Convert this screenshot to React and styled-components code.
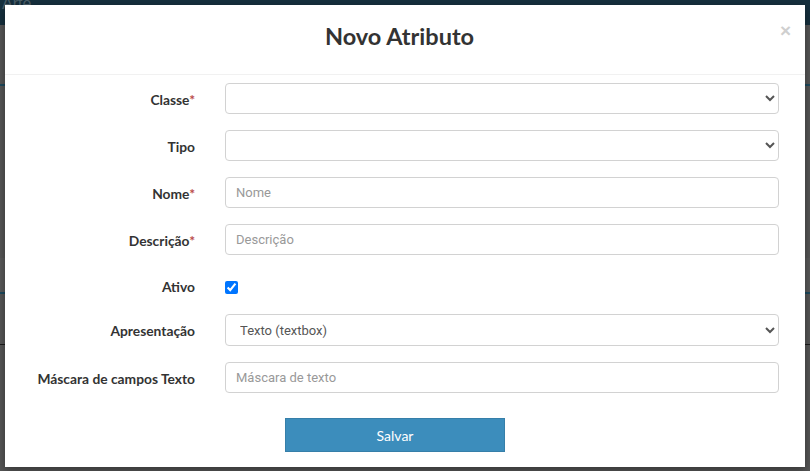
import React from 'react'
import styled, { createGlobalStyle } from 'styled-components'

const GlobalStyle = createGlobalStyle`
  html, body {
    margin: 0;
    padding: 0;
    width: 810px;
    height: 471px;
    overflow: hidden;
    background: #565656;
    font-family: Lato, "Noto Sans", sans-serif;
  }
  * { box-sizing: border-box; }
`

// the dimmed page behind the dialog
const Page = styled.div`
  position: relative;
  width: 810px;
  height: 471px;
  display: flex;
  flex-direction: column;
  background: #565656;
`

const TopBar = styled.div`
  height: 25px;
  background: #16303e;
  color: #4c5f69;
  font-size: 16px;
  line-height: 8px;
  padding-left: 2px;
  font-family: "Liberation Sans", sans-serif;
`

const Band = styled.div`
  height: ${p => p.h}px;
  background: ${p => p.bg || '#565656'};
  border-bottom: ${p => p.line ? `${p.lineW || 2}px solid ${p.line}` : 'none'};
`

const Modal = styled.div`
  position: absolute;
  top: 5px;
  left: 5px;
  width: 800px;
  height: 462px;
  background: #fff;
  box-shadow: 0 3px 9px rgba(0, 0, 0, 0.4);
  display: flex;
  flex-direction: column;
`

const Header = styled.div`
  position: relative;
  height: 70px;
  padding-right: 11px;
  border-bottom: 1px solid #f1f1f1;
  display: flex;
  align-items: center;
  justify-content: center;
`

const Title = styled.h4`
  margin: 0;
  padding-bottom: 7px;
  font-size: 23.5px;
  font-weight: 700;
  color: #333;
`

const Close = styled.span`
  position: absolute;
  right: 14px;
  top: 15px;
  font-size: 19px;
  font-weight: 700;
  color: #cfcfcf;
  font-family: "Liberation Sans", sans-serif;
`

const Body = styled.form`
  padding: 8px 26px 0 20px;
  display: flex;
  flex-direction: column;
  gap: 16px;
`

const Row = styled.div`
  display: grid;
  grid-template-columns: 170px 1fr;
  column-gap: 30px;
  align-items: ${p => p.compact ? 'end' : 'center'};
  min-height: ${p => p.compact ? 27 : 31}px;
  padding-bottom: ${p => p.compact ? 3 : 0}px;
`

const Label = styled.label`
  text-align: right;
  font-size: 13.8px;
  font-weight: 700;
  color: #333;
  padding-top: 1px;
`

const Req = styled.span`
  color: #b94a48;
`

const Control = styled.div`
  display: flex;
  align-items: center;
`

const Input = styled.input`
  height: 31px;
  width: 100%;
  border: 1px solid #d2d2d2;
  border-radius: 4px;
  padding: 6px 10px;
  font-family: Roboto, "Liberation Sans", sans-serif;
  font-size: 13px;
  color: #555;
  background: #fff;
  outline: none;
  &::placeholder { color: #999; }
`

const Select = styled.select`
  height: ${p => p.tall ? 32 : 31}px;
  width: 100%;
  border: 1px solid #d2d2d2;
  border-radius: 4px;
  padding: 6px 10px;
  font-family: Roboto, "Liberation Sans", sans-serif;
  font-size: 13px;
  color: #555;
  background: #fff;
  outline: none;
`

const Check = styled.input`
  margin: 0 0 1px 0;
  width: 13px;
  height: 13px;
`

const Footer = styled.div`
  display: flex;
  justify-content: center;
  padding: 9px 0 0 0;
`

const Button = styled.button`
  width: 220px;
  height: 34px;
  margin-left: -14px;
  background: #3c8dbc;
  border: 1px solid #367fa9;
  color: #fff;
  font-family: Lato, sans-serif;
  font-size: 14px;
`

const Field = ({ label, req, children, compact }) => (
  <Row compact={compact}>
    <Label>{label}{req && <Req>*</Req>}</Label>
    <Control>{children}</Control>
  </Row>
)

export default function App() {
  return (
    <>
      <GlobalStyle />
      <Page>
        <TopBar>Arte</TopBar>
        <Band h={61} line="#1d4a5f" />
        <Band h={172} />
        <Band h={36} bg="#5a5a5a" line="#1d4a5f" />
        <Band h={51} line="#1a1a1a" lineW={1} />
        <Band h={120} />

        <Modal>
          <Header>
            <Title>Novo Atributo</Title>
            <Close>×</Close>
          </Header>
          <Body onSubmit={e => e.preventDefault()}>
            <Field label="Classe" req>
              <Select defaultValue=""><option value=""></option></Select>
            </Field>
            <Field label="Tipo">
              <Select defaultValue=""><option value=""></option></Select>
            </Field>
            <Field label="Nome" req>
              <Input placeholder="Nome" />
            </Field>
            <Field label="Descrição" req>
              <Input placeholder="Descrição" />
            </Field>
            <Field label="Ativo" compact>
              <Check type="checkbox" defaultChecked />
            </Field>
            <Field label="Apresentação">
              <Select tall defaultValue="textbox">
                <option value="textbox">Texto (textbox)</option>
              </Select>
            </Field>
            <Field label="Máscara de campos Texto">
              <Input placeholder="Máscara de texto" />
            </Field>
            <Footer>
              <Button type="button">Salvar</Button>
            </Footer>
          </Body>
        </Modal>
      </Page>
    </>
  )
}
